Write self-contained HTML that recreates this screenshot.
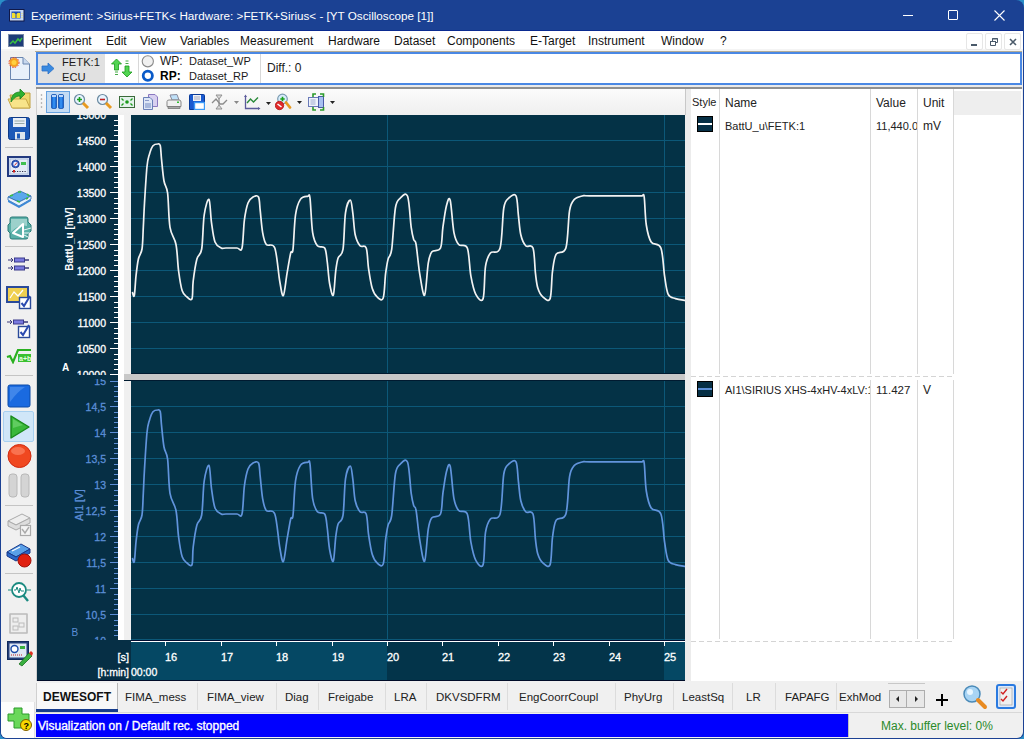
<!DOCTYPE html>
<html><head><meta charset="utf-8">
<style>
*{margin:0;padding:0;box-sizing:border-box}
html,body{width:1024px;height:739px;overflow:hidden;background:#2a8ec8;font-family:"Liberation Sans",sans-serif;font-size:12px;color:#000}
.a{position:absolute}
.t{position:absolute;white-space:nowrap;line-height:14px}
.m{position:absolute;top:34px;line-height:14px;white-space:nowrap;color:#111}
.sep{position:absolute;left:5px;width:28px;height:1px;background:#c4c4c4}
.tb{position:absolute;top:683px;height:28px;line-height:28px;white-space:nowrap;color:#222;font-size:11.5px}
.td{position:absolute;top:683px;width:1px;height:27px;background:#dcdcdc}
</style></head><body>
<div class="a" style="left:0;top:0;width:1024px;height:739px;background:#1b4193;border-radius:8px 8px 7px 7px"></div>
<!-- title -->
<svg class="a" style="left:9px;top:9px" width="16" height="13"><rect x="0.5" y="0.5" width="14.5" height="11.5" fill="#c8daf4" stroke="#101848"/><rect x="2.5" y="2.5" width="9" height="7" fill="#1a4ab8"/><path d="M3 4Q5 3 6.5 5V9H3zM7.5 5Q9 3 11 4V9H7.5z" fill="#f4e030"/><path d="M13 4v1M13 6v1M13 8v1" stroke="#f0e060" stroke-width="1"/></svg>
<div class="t" style="left:31px;top:9px;color:#fff;font-size:11.7px">Experiment: &gt;Sirius+FETK&lt; Hardware: &gt;FETK+Sirius&lt; - [YT Oscilloscope [1]]</div>
<div class="a" style="left:903px;top:15px;width:10px;height:1px;background:#fff"></div>
<div class="a" style="left:948px;top:10px;width:10px;height:10px;border:1px solid #fff;border-radius:1px"></div>
<svg class="a" style="left:994px;top:10px" width="11" height="11"><path d="M0.5 0.5L10.5 10.5M10.5 0.5L0.5 10.5" stroke="#fff" stroke-width="1.1"/></svg>
<!-- client -->
<div class="a" style="left:1px;top:30px;width:1022px;height:708px;background:#f0f0f0;border-radius:0 0 6px 6px"></div>
<!-- menu -->
<div class="a" style="left:1px;top:30px;width:1022px;height:1px;background:#0a2a90"></div><div class="a" style="left:1px;top:31px;width:1022px;height:18px;background:#fff"></div><div class="a" style="left:1px;top:49px;width:1022px;height:2px;background:#f4f4f4"></div>
<svg class="a" style="left:8px;top:34px" width="17" height="14"><rect x="0.5" y="0.5" width="15" height="12" fill="#1e3c78" stroke="#7888a8"/><path d="M2 10L5 7L7 9L10 5L12 7L14 4" stroke="#3ac040" fill="none" stroke-width="1.5"/></svg>
<span class="m" style="left:31px">Experiment</span>
<span class="m" style="left:106px">Edit</span>
<span class="m" style="left:140px">View</span>
<span class="m" style="left:180px">Variables</span>
<span class="m" style="left:240px">Measurement</span>
<span class="m" style="left:328px">Hardware</span>
<span class="m" style="left:394px">Dataset</span>
<span class="m" style="left:447px">Components</span>
<span class="m" style="left:530px">E-Target</span>
<span class="m" style="left:588px">Instrument</span>
<span class="m" style="left:661px">Window</span>
<span class="m" style="left:720px">?</span>
<div class="a" style="left:966px;top:33px;width:17px;height:17px;border:1px solid #e6e6e6;border-radius:2px;background:#fff"></div>
<div class="a" style="left:985px;top:33px;width:17px;height:17px;border:1px solid #e6e6e6;border-radius:2px;background:#fff"></div>
<div class="a" style="left:1004px;top:33px;width:17px;height:17px;border:1px solid #e6e6e6;border-radius:2px;background:#fff"></div>
<div class="a" style="left:971px;top:44px;width:6px;height:2px;background:#4a5a6a"></div>
<svg class="a" style="left:989px;top:37px" width="10" height="10"><path d="M1.5 4.5h5v4h-5zM3.5 4.5v-3h5v4h-2" stroke="#4a5a6a" fill="none" stroke-width="1"/><path d="M1 4.5h6M3 2h6" stroke="#4a5a6a" stroke-width="1.2"/></svg>
<svg class="a" style="left:1009px;top:38px" width="8" height="8"><path d="M1 1L7 7M7 1L1 7" stroke="#4a5a6a" stroke-width="1.6"/></svg>
<!-- left toolbar -->
<div class="a" style="left:1px;top:52px;width:34px;height:649px;background:#f0f0f0"></div>
<div class="a" style="left:1px;top:702px;width:34px;height:36px;background:#fdfdfd;border-radius:0 0 0 6px;border-right:1px solid #e0e0e0"></div>
<div class="sep" style="top:147px"></div>
<div class="sep" style="top:246px"></div>
<div class="sep" style="top:375px"></div>
<div class="sep" style="top:505px"></div>
<div class="sep" style="top:573px"></div>
<!-- new doc -->
<svg class="a" style="left:8px;top:56px" width="24" height="25"><path d="M2.5 1.5H15L21.5 8V23.5H2.5z" fill="#e8f0fa" stroke="#6a86b0"/><path d="M15 1.5V8H21.5" fill="#c8d8ee" stroke="#6a86b0"/><circle cx="6" cy="6.5" r="4.5" fill="#f5a020"/><circle cx="6" cy="6.5" r="2.5" fill="#ffd040"/><circle cx="6" cy="6.5" r="5" fill="none" stroke="#e83a20" stroke-width="1" stroke-dasharray="1.5 1.2"/></svg>
<!-- folder -->
<svg class="a" style="left:7px;top:87px" width="25" height="23"><path d="M3 8H10L12 6H23V21H6z" fill="#f0d870" stroke="#c0a040"/><path d="M1 12H19L23 21H5z" fill="#f8e48a" stroke="#c8a848"/><path d="M4 15C4 8 8 5 13 5V2L18 7L13 12V9C9 9 7 11 4 15z" fill="#2eb030" stroke="#1a8020" stroke-width="0.8"/></svg>
<!-- save -->
<svg class="a" style="left:8px;top:117px" width="23" height="24"><rect x="0.5" y="0.5" width="21" height="22" rx="2" fill="#1e5ab8" stroke="#0e3a88"/><rect x="5" y="1" width="13" height="9" fill="#e8eef6"/><path d="M6.5 4H16.5M6.5 6.5H16.5" stroke="#9aa"/><rect x="7" y="15" width="10" height="7.5" fill="#dfe6ee"/><rect x="9" y="16.5" width="3" height="5" fill="#1e5ab8"/></svg>
<!-- monitor -->
<svg class="a" style="left:7px;top:156px" width="25" height="22"><rect x="1" y="1" width="22" height="19" fill="#e4ecf6" stroke="#233a80" stroke-width="2"/><rect x="3" y="3" width="18" height="15" fill="none" stroke="#9ab0d8" stroke-width="0.8"/><circle cx="8.5" cy="8" r="3.8" fill="#2a5ac0" stroke="#1a3a90" stroke-width="0.8"/><circle cx="8.5" cy="8" r="2.3" fill="#e8f0ff"/><path d="M7.5 9.5L10 6.5" stroke="#d03030" stroke-width="1"/><rect x="14" y="6" width="5" height="3" fill="#40c050"/><path d="M5 15.5H19" stroke="#303050" stroke-width="1.2" stroke-dasharray="1.2 1.3"/><rect x="6" y="14" width="2" height="2.5" fill="#d02020"/></svg>
<!-- book -->
<svg class="a" style="left:7px;top:188px" width="25" height="20"><path d="M1 9L13 3L24 8L12 14z" fill="#5aa8ec" stroke="#2a6ab0" stroke-width="0.8"/><path d="M1 9V12L12 18L24 11V8L12 14z" fill="#e8f2fc" stroke="#2a6ab0" stroke-width="0.8"/><path d="M1 12L12 18L24 11V13L12 20L1 14z" fill="#3a88d8"/><path d="M3 8L6 7M11 4L14 4M20 6L22 8M10 13L13 14M19 11L21 10" stroke="#3ac040" stroke-width="1.6"/></svg>
<!-- triangle -->
<svg class="a" style="left:7px;top:216px" width="25" height="24"><path d="M5 1H19Q21 1 21 3V6L24 9V15L21 18V21Q21 23 19 23H5Q3 23 3 21V17L1 15V9L3 7V3Q3 1 5 1z" fill="#5ab0a8" stroke="#2a7a78" stroke-width="1"/><path d="M4 3H20V10Q12 8 4 16z" fill="#b8e0da" opacity="0.7"/><path d="M6 17L16 8V21z" fill="none" stroke="#fff" stroke-width="2" stroke-linejoin="round"/><path d="M17 14l7-2M17 17l7 0M17 19l6 3" stroke="#e8f4f4" stroke-width="1"/></svg>
<!-- lines -->
<svg class="a" style="left:7px;top:256px" width="24" height="18"><path d="M1 4H6M4 2L6 4L4 6M1 12H6M4 10L6 12L4 14" stroke="#3a3a7a" fill="none" stroke-width="1"/><rect x="7.5" y="2" width="10" height="4" fill="#7a7ae0" stroke="#3a3a8a"/><rect x="7.5" y="10" width="10" height="4" fill="#7a7ae0" stroke="#3a3a8a"/><path d="M18 4H22M18 12H22" stroke="#3a3a7a" stroke-width="1.5"/></svg>
<!-- chart check -->
<svg class="a" style="left:6px;top:286px" width="27" height="25"><rect x="1" y="1" width="21" height="15" fill="#f0d050" stroke="#2a4a9a" stroke-width="2"/><path d="M4 12L8 6L12 10L17 4" stroke="#fff" stroke-width="1.2" fill="none"/><rect x="13.5" y="11.5" width="11" height="11" fill="#fff" stroke="#2a4a9a" stroke-width="1.4"/><path d="M15.5 17L18 20L24 10" stroke="#2a4ab0" stroke-width="2" fill="none"/></svg>
<!-- list check -->
<svg class="a" style="left:6px;top:317px" width="26" height="22"><path d="M1 5H6M4 3L6 5L4 7" stroke="#3a3a7a" fill="none"/><rect x="7.5" y="3" width="10" height="4" fill="#7a7ae0" stroke="#3a3a8a"/><path d="M18 5H22" stroke="#3a3a7a" stroke-width="1.5"/><rect x="12.5" y="9.5" width="11" height="11" fill="#fff" stroke="#2a4a9a" stroke-width="1.4"/><path d="M14.5 15L17 18L23 8" stroke="#2a4ab0" stroke-width="2" fill="none"/></svg>
<!-- sqrt -->
<svg class="a" style="left:6px;top:348px" width="26" height="16"><path d="M1 9L4 8L7 14L12 2H25" stroke="#2ab020" stroke-width="2.2" fill="none"/><rect x="12" y="6" width="13" height="8" fill="#3ac030"/><text x="13" y="13" font-family="Liberation Sans" font-size="7" font-weight="bold" fill="#e8ffe0">a+b</text></svg>
<!-- blue square -->
<svg class="a" style="left:7px;top:384px" width="24" height="24"><rect x="1" y="1" width="22" height="22" rx="2" fill="#1a6ae0" stroke="#0a4aa8"/><path d="M3 3H18Q10 8 3 18z" fill="#5a9af0" opacity="0.6"/></svg>
<!-- play highlighted -->
<div class="a" style="left:3px;top:411px;width:31px;height:31px;background:#d0e6f8;border:1px solid #a8d0f0;border-radius:2px"></div>
<svg class="a" style="left:8px;top:414px" width="24" height="26"><path d="M3 2L21 13L3 24z" fill="#3ab83a" stroke="#1a8a1a" stroke-width="1.4" stroke-linejoin="round"/><path d="M5 5L15 11L5 14z" fill="#7ad87a" opacity="0.6"/></svg>
<!-- record -->
<svg class="a" style="left:7px;top:443px" width="25" height="26"><circle cx="12.5" cy="13" r="11.5" fill="#f04820" stroke="#d02a10"/><ellipse cx="11" cy="8" rx="7" ry="4" fill="#ff9070" opacity="0.6"/></svg>
<!-- pause gray -->
<svg class="a" style="left:7px;top:473px" width="24" height="25"><rect x="2" y="1" width="8" height="23" rx="3" fill="#d4d4d4" stroke="#b8b8b8"/><rect x="14" y="1" width="8" height="23" rx="3" fill="#d4d4d4" stroke="#b8b8b8"/></svg>
<!-- gray device -->
<svg class="a" style="left:7px;top:512px" width="25" height="26"><path d="M1 9L15 2L23 6L9 13z" fill="#eee" stroke="#aaa"/><path d="M1 9V14L9 18L23 11V6L9 13z" fill="#ddd" stroke="#aaa"/><rect x="13.5" y="13.5" width="10" height="10" fill="#f4f4f4" stroke="#aaa" stroke-width="1.2"/><path d="M15 17L18 21L22 15" stroke="#aaa" stroke-width="1.4" fill="none"/></svg>
<!-- red device -->
<svg class="a" style="left:6px;top:542px" width="26" height="26"><path d="M1 10L15 2L24 7L10 15z" fill="#5aa0e8" stroke="#1a3a8a"/><path d="M1 10V14L10 19L24 11V7L10 15z" fill="#2a68c8" stroke="#1a3a8a"/><path d="M6 9L14 5" stroke="#fff" stroke-width="1.2"/><circle cx="18.5" cy="18.5" r="6.5" fill="#e02010" stroke="#a01008"/></svg>
<!-- search wave -->
<svg class="a" style="left:7px;top:581px" width="25" height="22"><circle cx="12" cy="9" r="7" fill="#fff" stroke="#1a8a80" stroke-width="1.8"/><path d="M7 9L9 9L10 6L12 12L13 7L14 10H17" stroke="#1a8a80" stroke-width="1" fill="none"/><path d="M16 14L21 20" stroke="#1a8a80" stroke-width="2.4"/><path d="M1 9H4M20 9H24" stroke="#1a8a80" stroke-width="1"/></svg>
<!-- gray doc -->
<svg class="a" style="left:7px;top:611px" width="24" height="26"><path d="M3 3H20V22H3z" fill="#eee" stroke="#bbb" stroke-width="1.6" stroke-linejoin="round"/><rect x="6" y="7" width="5" height="4" fill="none" stroke="#bbb"/><rect x="12" y="12" width="5" height="4" fill="none" stroke="#bbb"/><rect x="6" y="15" width="5" height="4" fill="none" stroke="#bbb"/></svg>
<!-- monitor pen -->
<svg class="a" style="left:7px;top:641px" width="26" height="26"><rect x="0.5" y="0.5" width="21" height="18" fill="#243e7a" stroke="#102a5a"/><rect x="2.5" y="2.5" width="17" height="14" fill="#dfe8f4"/><circle cx="7.5" cy="8" r="3.5" fill="#fff" stroke="#1a4aa8" stroke-width="1.4"/><rect x="13" y="5" width="5" height="3" fill="#3ab040"/><path d="M4 14H16" stroke="#c02020" stroke-width="1.2" stroke-dasharray="1 1"/><path d="M12 23L22 12L25 15L15 25z" fill="#3ab040" stroke="#1a7020" stroke-width="0.8"/><path d="M22 12L24 10L26 12L25 15z" fill="#e03020"/></svg>
<!-- green plus -->
<svg class="a" style="left:7px;top:707px" width="25" height="24"><path d="M7 1H15V7H22V14H15V21H7V14H1V7H7z" fill="#6ad85a" stroke="#2a9a2a"/><circle cx="19" cy="18" r="5.5" fill="#f8d800" stroke="#806000"/><text x="16.5" y="21.5" font-family="Liberation Sans" font-size="9" font-weight="bold" fill="#000">?</text></svg>
<!-- main toolbar -->
<div class="a" style="left:35px;top:51px;width:987px;height:1px;background:#b4ab94"></div>
<div class="a" style="left:36px;top:52px;width:986px;height:33px;border:2px solid #4a88e4;background:#fff"></div>
<div class="a" style="left:38px;top:54px;width:67px;height:29px;background:#e1e1e1"></div>
<div class="a" style="left:138px;top:54px;width:1px;height:29px;background:#d8d8d8"></div>
<div class="a" style="left:260px;top:54px;width:1px;height:29px;background:#d8d8d8"></div>
<svg class="a" style="left:41px;top:62px" width="14" height="13"><path d="M1 4h6V1l6 5.5-6 5.5V9H1z" fill="#3a8ae0" stroke="#2a70c8" stroke-width="0.8"/></svg>
<div class="t" style="left:62px;top:54.5px;font-size:11.2px;color:#1a1a1a">FETK:1</div>
<div class="t" style="left:62px;top:69.5px;font-size:11.2px;color:#1a1a1a">ECU</div>
<svg class="a" style="left:111px;top:58px" width="22" height="20"><path d="M5.5 1L10.5 6H7.5V12H3.5V6H0.5z" fill="#52d452" stroke="#1a9a1a" stroke-width="0.8"/><path d="M4 14h3M4 16.5h3" stroke="#4a4" stroke-width="1"/><path d="M16 19L21 14H18V8H14V14H11z" fill="#52d452" stroke="#1a9a1a" stroke-width="0.8"/><path d="M14.5 3h3M14.5 5.5h3" stroke="#4a4" stroke-width="1"/></svg>
<svg class="a" style="left:141px;top:55px" width="14" height="28"><circle cx="6.8" cy="6.3" r="5.6" fill="#f0f0f0" stroke="#8a8a8a" stroke-width="1.1"/><circle cx="6.8" cy="20.8" r="4.6" fill="#fff" stroke="#0a5ac8" stroke-width="2.8"/></svg>
<div class="t" style="left:160px;top:54px;color:#1a1a1a;font-size:12px">WP:</div>
<div class="t" style="left:160px;top:69px;color:#000;font-size:12px;font-weight:bold">RP:</div>
<div class="t" style="left:189px;top:54px;color:#1a1a1a;font-size:11px">Dataset_WP</div>
<div class="t" style="left:189px;top:69px;color:#1a1a1a;font-size:11px">Dataset_RP</div>
<div class="t" style="left:267px;top:61px;color:#1a1a1a;font-size:12px">Diff.: 0</div>
<div class="a" style="left:35px;top:85px;width:987px;height:2px;background:#eaeaea"></div>
<div class="a" style="left:36px;top:87px;width:986px;height:2px;background:#909090"></div>
<!-- plot toolbar -->
<div class="a" style="left:36px;top:89px;width:651px;height:26px;background:linear-gradient(#fbfbfb,#efefef)"></div>
<div class="a" style="left:36px;top:89px;width:1px;height:593px;background:#d0d0d0"></div>
<svg class="a" style="left:40px;top:93px" width="3" height="20"><circle cx="1.5" cy="2" r="0.8" fill="#999"/><circle cx="1.5" cy="6" r="0.8" fill="#999"/><circle cx="1.5" cy="10" r="0.8" fill="#999"/><circle cx="1.5" cy="14" r="0.8" fill="#999"/></svg>
<div class="a" style="left:46px;top:91px;width:24px;height:22px;background:#c4dcf4;border:1px solid #66a2e0"></div>
<svg class="a" style="left:51px;top:94px" width="14" height="16"><defs><linearGradient id="pg" x1="0" x2="1"><stop offset="0" stop-color="#0a58c8"/><stop offset="0.5" stop-color="#3a98f8"/><stop offset="1" stop-color="#0a58c8"/></linearGradient></defs><rect x="0.5" y="0.5" width="5" height="14" rx="1.2" fill="url(#pg)" stroke="#0a48a8" stroke-width="0.7"/><rect x="7.5" y="0.5" width="5" height="14" rx="1.2" fill="url(#pg)" stroke="#0a48a8" stroke-width="0.7"/><rect x="1" y="1" width="4" height="2" fill="#bcd8fc"/><rect x="8" y="1" width="4" height="2" fill="#bcd8fc"/></svg>
<svg class="a" style="left:73px;top:93px" width="17" height="18"><circle cx="6.5" cy="6.5" r="5" fill="#e8f4ff" stroke="#6a8aa0" stroke-width="1.2"/><path d="M4 6.5h5M6.5 4v5" stroke="#1aa01a" stroke-width="1.6"/><path d="M10 10l5 5" stroke="#e89a20" stroke-width="3"/></svg>
<svg class="a" style="left:96px;top:93px" width="17" height="18"><circle cx="6.5" cy="6.5" r="5" fill="#e8f4ff" stroke="#6a8aa0" stroke-width="1.2"/><path d="M4 6.5h5" stroke="#c02020" stroke-width="1.6"/><path d="M10 10l5 5" stroke="#e89a20" stroke-width="3"/></svg>
<svg class="a" style="left:119px;top:96px" width="17" height="13"><rect x="0.5" y="0.5" width="15" height="11" fill="#e4f2ec" stroke="#3a6a3a"/><circle cx="8" cy="6" r="1.8" fill="#1a9a1a"/><path d="M2.5 2.5l2 2M13.5 2.5l-2 2M2.5 9.5l2-2M13.5 9.5l-2-2" stroke="#1a9a1a" stroke-width="1.3"/></svg>
<svg class="a" style="left:143px;top:94px" width="16" height="16"><path d="M5.5 0.5H12L14.5 3V12.5H5.5z" fill="#d8d0f0" stroke="#8a78c0"/><path d="M0.5 3.5H7L9.5 6V15.5H0.5z" fill="#dde6f6" stroke="#6a80b8"/><rect x="2" y="9" width="6" height="5" fill="#a8b8dc"/><path d="M2 6.5H6" stroke="#8a9ac8"/></svg>
<svg class="a" style="left:166px;top:94px" width="16" height="16"><path d="M4 1L11 0.5L13 6H6z" fill="#bfe0f8" stroke="#889"/><path d="M1 7.5Q1 6 3 6H13Q15 6 15 8V12.5H1z" fill="#f0f0f0" stroke="#888"/><path d="M2 12.5H14V14.5H2z" fill="#a8a8a8" stroke="#777" stroke-width="0.8"/><rect x="11" y="7.5" width="2" height="1.5" fill="#30c030"/></svg>
<svg class="a" style="left:189px;top:94px" width="16" height="16"><path d="M0.5 1.5Q0.5 0.5 1.5 0.5H14.5Q15.5 0.5 15.5 1.5V15.5H0.5z" fill="#1a5ad0" stroke="#0a3a98"/><rect x="4" y="1" width="8" height="6" fill="#eef2f8"/><path d="M5 3H11M5 5H11" stroke="#aab"/><rect x="5.5" y="8.5" width="10" height="7" fill="#fff" stroke="#3a9af8" stroke-width="1.4"/></svg>
<svg class="a" style="left:211px;top:93px" width="30" height="18"><path d="M5 2H11L8 6zM5 16H11L8 12z" fill="#d8d8d8" stroke="#8a8a8a" stroke-width="0.9"/><path d="M8 6V12" stroke="#8a8a8a" stroke-width="1.2"/><path d="M1 10L5 6L9 11L12 11L16 7" stroke="#8a8a8a" stroke-width="1.3" fill="none"/><path d="M23 8h5l-2.5 3z" fill="#888"/></svg>
<svg class="a" style="left:244px;top:94px" width="30" height="17"><path d="M1.5 2V14.5H15" stroke="#5a5a9a" stroke-width="1.3" fill="none"/><path d="M0 3L1.5 0.5L3 3zM14 13L16.5 14.5L14 16z" fill="#5a5a9a"/><path d="M3 9L6.5 5L9.5 8L14 3.5" stroke="#2a8a3a" stroke-width="1.4" fill="none"/><path d="M22 8h5l-2.5 3z" fill="#222"/></svg>
<svg class="a" style="left:275px;top:93px" width="30" height="18"><circle cx="7.5" cy="6" r="4.8" fill="#d8eefc" stroke="#7a9ab0" stroke-width="1.2"/><path d="M5.3 6h4.4M7.5 3.8v4.4" stroke="#1aa01a" stroke-width="1.6"/><path d="M11 9.5l4 5" stroke="#e89a20" stroke-width="2.8" stroke-linecap="round"/><circle cx="4.5" cy="12.5" r="4.2" fill="#e02828" stroke="#b01818" stroke-width="0.8"/><path d="M2.5 11l4 3" stroke="#fff" stroke-width="1.5"/><path d="M22 8h5l-2.5 3z" fill="#222"/></svg>
<svg class="a" style="left:308px;top:93px" width="30" height="18"><rect x="0.5" y="4.5" width="10" height="9" fill="#eef2fa" stroke="#6a7ab8"/><path d="M2.5 7H7.5M2.5 9H7.5M2.5 11H7.5" stroke="#8a9ac8" stroke-width="0.8"/><rect x="10.5" y="3.5" width="5" height="11" fill="#a8c0f0" stroke="#4a5aa8"/><path d="M8 1H5V4M12 1H15.5V4M8 17H5V14M12 17H15.5V14" stroke="#2a9a2a" stroke-width="1.6" fill="none"/><path d="M22 8h5l-2.5 3z" fill="#222"/></svg>
<!-- legend -->
<div class="a" style="left:685px;top:89px;width:6px;height:592px;background:#ececec"></div>
<div class="a" style="left:685px;top:89px;width:1px;height:26px;background:#c8c8c8"></div>
<div class="a" style="left:691px;top:89px;width:331px;height:592px;background:#fff"></div>
<div class="a" style="left:953px;top:91px;width:68px;height:24px;background:#eeeeee"></div>
<div class="a" style="left:719px;top:89px;width:1px;height:285px;background:#d8d8d8"></div>
<div class="a" style="left:870px;top:89px;width:1px;height:285px;background:#d8d8d8"></div>
<div class="a" style="left:917px;top:89px;width:1px;height:285px;background:#d8d8d8"></div>
<div class="a" style="left:953px;top:89px;width:1px;height:285px;background:#d8d8d8"></div>
<div class="a" style="left:719px;top:380px;width:1px;height:259px;background:#d8d8d8"></div>
<div class="a" style="left:870px;top:380px;width:1px;height:259px;background:#d8d8d8"></div>
<div class="a" style="left:917px;top:380px;width:1px;height:259px;background:#d8d8d8"></div>
<div class="a" style="left:953px;top:380px;width:1px;height:259px;background:#d8d8d8"></div>
<svg class="a" style="left:691px;top:375px" width="264" height="3"><path d="M0 1.5H263" stroke="#d4d4d4" stroke-width="1" stroke-dasharray="5 3"/></svg>
<svg class="a" style="left:691px;top:640px" width="264" height="3"><path d="M0 1.5H263" stroke="#d4d4d4" stroke-width="1" stroke-dasharray="5 3"/></svg>
<div class="t" style="left:692px;top:94.5px;color:#222;font-size:11px">Style</div>
<div class="t" style="left:725px;top:96px;color:#222">Name</div>
<div class="t" style="left:876px;top:96px;color:#222">Value</div>
<div class="t" style="left:923px;top:96px;color:#222">Unit</div>
<div class="a" style="left:697px;top:116px;width:16px;height:16px;background:#062f45;border:1px solid #000"></div>
<div class="a" style="left:698px;top:123px;width:14px;height:2px;background:#ffffff"></div>
<div class="t" style="left:725px;top:119px;color:#222;font-size:11px">BattU_u\FETK:1</div>
<div class="a" style="left:871px;top:115px;width:46px;height:20px;overflow:hidden"><div class="t" style="left:5px;top:4px;color:#222;font-size:11px">11,440.0</div></div>
<div class="t" style="left:923px;top:119px;color:#222">mV</div>
<div class="a" style="left:697px;top:381px;width:16px;height:16px;background:#062f45;border:1px solid #000"></div>
<div class="a" style="left:698px;top:388px;width:14px;height:2px;background:#5b8ed6"></div>
<div class="a" style="left:720px;top:380px;width:150px;height:20px;overflow:hidden"><div class="t" style="left:5px;top:3px;color:#222;font-size:11px">AI1\SIRIUS XHS-4xHV-4xLV:1</div></div>
<div class="t" style="left:876px;top:383px;color:#222;font-size:11.5px">11.427</div>
<div class="t" style="left:923px;top:383px;color:#222">V</div>
<!-- y axis / plots -->
<div class="a" style="left:37px;top:115px;width:81px;height:565px;background:#062f45"></div>
<div class="a" style="left:118px;top:640px;width:13px;height:40px;background:#062f45"></div>
<div class="a" style="left:118px;top:115px;width:6px;height:525px;background:#fff"></div>
<div class="a" style="left:124px;top:115px;width:7px;height:525px;background:#f0f0f0"></div>
<div class="a" style="left:131px;top:115px;width:554px;height:259px;background:#043246"></div>
<div class="a" style="left:124px;top:374px;width:561px;height:6px;background:#c8c8c8"></div>
<div class="a" style="left:131px;top:380px;width:554px;height:260px;background:#043246"></div>
<div class="a" style="left:131px;top:640px;width:554px;height:40px;background:#03344a"></div>
<div class="a" style="left:131px;top:640px;width:256px;height:40px;background:#054864"></div>
<div class="a" style="left:664px;top:640px;width:21px;height:40px;background:#054864"></div>
<div class="a" style="left:37px;top:680px;width:648px;height:1px;background:#000c28"></div>
<svg class="a" style="left:0;top:0" width="1024" height="739" shape-rendering="auto">
<defs><clipPath id="c1"><rect x="131" y="115" width="554" height="258"/></clipPath><clipPath id="c2"><rect x="131" y="381" width="554" height="258"/></clipPath><clipPath id="a1"><rect x="37" y="115" width="81" height="260"/></clipPath><clipPath id="a2"><rect x="37" y="379" width="81" height="261"/></clipPath></defs>
<path d="M131 140.5 H685 M131 166.5 H685 M131 192.5 H685 M131 218.5 H685 M131 244.5 H685 M131 270.5 H685 M131 296.5 H685 M131 322.5 H685 M131 348.5 H685 M131 406.5 H685 M131 432.5 H685 M131 458.5 H685 M131 484.5 H685 M131 510.5 H685 M131 536.5 H685 M131 562.5 H685 M131 588.5 H685 M131 614.5 H685 M131 639.5 H685 M387.5 115 V374 M387.5 381 V640 M664.5 115 V374 M664.5 381 V640" stroke="#0c5878" stroke-width="1" fill="none"/>
<path d="M131 640.5 H685" stroke="#000c30" stroke-width="1"/>
<path d="M131 373.5 H685 M124 380.5 H685" stroke="#001a30" stroke-width="1"/>
<path d="M132.30 292.00 C132.63 292.60 133.68 298.27 134.30 295.60 C134.92 292.93 135.32 282.10 136.00 276.00 C136.68 269.90 137.40 263.50 138.40 259.00 C139.40 254.50 141.18 254.27 142.00 249.00 C142.82 243.73 142.88 235.07 143.30 227.40 C143.72 219.73 143.88 213.15 144.50 203.00 C145.12 192.85 146.18 174.60 147.00 166.50 C147.82 158.40 148.40 157.85 149.40 154.40 C150.40 150.95 151.58 147.53 153.00 145.80 C154.42 144.07 156.68 144.00 157.90 144.00 C159.12 144.00 159.70 143.30 160.30 145.80 C160.90 148.30 160.88 153.13 161.50 159.00 C162.12 164.87 162.98 175.33 164.00 181.00 C165.02 186.67 166.60 185.27 167.60 193.00 C168.60 200.73 168.60 218.82 170.00 227.40 C171.40 235.98 174.57 237.23 176.00 244.50 C177.43 251.77 177.57 263.28 178.60 271.00 C179.63 278.72 180.80 286.47 182.20 290.80 C183.60 295.13 185.37 295.70 187.00 297.00 C188.63 298.30 190.97 301.27 192.00 298.60 C193.03 295.93 192.38 287.60 193.20 281.00 C194.02 274.40 195.48 264.33 196.90 259.00 C198.32 253.67 200.48 256.33 201.70 249.00 C202.92 241.67 202.98 223.27 204.20 215.00 C205.42 206.73 207.78 198.13 209.00 199.40 C210.22 200.67 210.50 215.50 211.50 222.60 C212.50 229.70 213.38 237.77 215.00 242.00 C216.62 246.23 219.37 247.00 221.20 248.00 C223.03 249.00 223.37 248.00 226.00 248.00 C228.63 248.00 234.33 248.00 237.00 248.00 C239.67 248.00 240.77 252.67 242.00 248.00 C243.23 243.33 243.40 227.50 244.40 220.00 C245.40 212.50 246.57 206.83 248.00 203.00 C249.43 199.17 251.25 198.00 253.00 197.00 C254.75 196.00 257.30 194.77 258.50 197.00 C259.70 199.23 259.52 204.52 260.20 210.40 C260.88 216.28 261.58 226.62 262.60 232.30 C263.62 237.98 264.27 241.88 266.30 244.50 C268.33 247.12 272.57 241.92 274.80 248.00 C277.03 254.08 278.28 273.07 279.70 281.00 C281.12 288.93 282.08 296.82 283.30 295.60 C284.52 294.38 285.77 280.80 287.00 273.70 C288.23 266.60 289.70 257.05 290.70 253.00 C291.70 248.95 292.20 255.73 293.00 249.40 C293.80 243.07 294.27 223.33 295.50 215.00 C296.73 206.67 298.37 202.52 300.40 199.40 C302.43 196.28 306.10 196.50 307.70 196.30 C309.30 196.10 309.18 192.20 310.00 198.20 C310.82 204.20 311.37 224.38 312.60 232.30 C313.83 240.22 315.38 243.08 317.40 245.70 C319.42 248.32 323.07 245.37 324.70 248.00 C326.33 250.63 326.38 255.58 327.20 261.50 C328.02 267.42 328.58 277.88 329.60 283.50 C330.62 289.12 332.28 297.23 333.30 295.20 C334.32 293.17 334.90 277.50 335.70 271.30 C336.50 265.10 336.88 261.65 338.10 258.00 C339.32 254.35 341.77 256.93 343.00 249.40 C344.23 241.87 344.28 221.00 345.50 212.80 C346.72 204.60 349.08 200.20 350.30 200.20 C351.52 200.20 351.98 207.05 352.80 212.80 C353.62 218.55 354.00 229.22 355.20 234.70 C356.40 240.18 358.17 243.48 360.00 245.70 C361.83 247.92 364.77 244.13 366.20 248.00 C367.63 251.87 367.60 262.18 368.60 268.90 C369.60 275.62 370.78 283.63 372.20 288.30 C373.62 292.97 375.27 295.28 377.10 296.90 C378.93 298.52 381.78 301.87 383.20 298.00 C384.62 294.13 384.78 280.18 385.60 273.70 C386.42 267.22 387.08 263.15 388.10 259.10 C389.12 255.05 390.48 257.92 391.70 249.40 C392.92 240.88 393.97 216.53 395.40 208.00 C396.83 199.47 398.27 200.15 400.30 198.20 C402.33 196.25 405.78 191.43 407.60 196.30 C409.42 201.17 410.18 220.18 411.20 227.40 C412.22 234.62 412.88 236.75 413.70 239.60 C414.52 242.45 415.10 238.82 416.10 244.50 C417.10 250.18 418.28 265.25 419.70 273.70 C421.12 282.15 423.17 297.02 424.60 295.20 C426.03 293.38 427.08 270.03 428.30 262.80 C429.52 255.57 429.87 254.27 431.90 251.80 C433.93 249.33 438.67 252.07 440.50 248.00 C442.33 243.93 441.90 234.48 442.90 227.40 C443.90 220.32 445.28 210.03 446.50 205.50 C447.72 200.97 448.97 195.73 450.20 200.20 C451.43 204.67 452.48 224.92 453.90 232.30 C455.32 239.68 456.47 241.88 458.70 244.50 C460.93 247.12 465.27 242.72 467.30 248.00 C469.33 253.28 469.48 268.47 470.90 276.20 C472.32 283.93 473.77 290.67 475.80 294.40 C477.83 298.13 481.48 303.27 483.10 298.60 C484.72 293.93 484.28 274.00 485.50 266.40 C486.72 258.80 487.97 256.07 490.40 253.00 C492.83 249.93 497.87 255.50 500.10 248.00 C502.33 240.50 502.37 216.30 503.80 208.00 C505.23 199.70 506.67 200.23 508.70 198.20 C510.73 196.17 514.38 192.95 516.00 195.80 C517.62 198.65 517.60 208.82 518.40 215.30 C519.20 221.78 519.58 229.63 520.80 234.70 C522.02 239.77 523.67 243.48 525.70 245.70 C527.73 247.92 531.37 243.33 533.00 248.00 C534.63 252.67 534.68 266.98 535.50 273.70 C536.32 280.42 536.68 284.43 537.90 288.30 C539.12 292.17 540.77 295.18 542.80 296.90 C544.83 298.62 548.48 302.87 550.10 298.60 C551.72 294.33 551.48 278.70 552.50 271.30 C553.52 263.90 553.97 258.08 556.20 254.20 C558.43 250.32 563.67 255.30 565.90 248.00 C568.13 240.70 568.18 218.50 569.60 210.40 C571.02 202.30 572.17 201.83 574.40 199.40 C576.63 196.97 580.40 196.40 583.00 195.80 C585.60 195.20 581.00 195.80 590.00 195.80 C599.00 195.80 628.33 195.78 637.00 195.80 C645.67 195.82 640.80 195.70 642.00 195.90 C643.20 196.10 643.48 192.15 644.20 197.00 C644.92 201.85 645.13 217.50 646.30 225.00 C647.47 232.50 648.77 238.17 651.20 242.00 C653.63 245.83 658.67 242.30 660.90 248.00 C663.13 253.70 663.38 268.47 664.60 276.20 C665.82 283.93 666.38 290.67 668.20 294.40 C670.02 298.13 672.65 297.58 675.50 298.60 C678.35 299.62 683.67 300.18 685.30 300.50" stroke="#f2f2f2" stroke-width="1.7" fill="none" stroke-linejoin="round" clip-path="url(#c1)"/>
<path d="M132.30 558.00 C132.63 558.60 133.68 564.27 134.30 561.60 C134.92 558.93 135.32 548.10 136.00 542.00 C136.68 535.90 137.40 529.50 138.40 525.00 C139.40 520.50 141.18 520.27 142.00 515.00 C142.82 509.73 142.88 501.07 143.30 493.40 C143.72 485.73 143.88 479.15 144.50 469.00 C145.12 458.85 146.18 440.60 147.00 432.50 C147.82 424.40 148.40 423.85 149.40 420.40 C150.40 416.95 151.58 413.53 153.00 411.80 C154.42 410.07 156.68 410.00 157.90 410.00 C159.12 410.00 159.70 409.30 160.30 411.80 C160.90 414.30 160.88 419.13 161.50 425.00 C162.12 430.87 162.98 441.33 164.00 447.00 C165.02 452.67 166.60 451.27 167.60 459.00 C168.60 466.73 168.60 484.82 170.00 493.40 C171.40 501.98 174.57 503.23 176.00 510.50 C177.43 517.77 177.57 529.28 178.60 537.00 C179.63 544.72 180.80 552.47 182.20 556.80 C183.60 561.13 185.37 561.70 187.00 563.00 C188.63 564.30 190.97 567.27 192.00 564.60 C193.03 561.93 192.38 553.60 193.20 547.00 C194.02 540.40 195.48 530.33 196.90 525.00 C198.32 519.67 200.48 522.33 201.70 515.00 C202.92 507.67 202.98 489.27 204.20 481.00 C205.42 472.73 207.78 464.13 209.00 465.40 C210.22 466.67 210.50 481.50 211.50 488.60 C212.50 495.70 213.38 503.77 215.00 508.00 C216.62 512.23 219.37 513.00 221.20 514.00 C223.03 515.00 223.37 514.00 226.00 514.00 C228.63 514.00 234.33 514.00 237.00 514.00 C239.67 514.00 240.77 518.67 242.00 514.00 C243.23 509.33 243.40 493.50 244.40 486.00 C245.40 478.50 246.57 472.83 248.00 469.00 C249.43 465.17 251.25 464.00 253.00 463.00 C254.75 462.00 257.30 460.77 258.50 463.00 C259.70 465.23 259.52 470.52 260.20 476.40 C260.88 482.28 261.58 492.62 262.60 498.30 C263.62 503.98 264.27 507.88 266.30 510.50 C268.33 513.12 272.57 507.92 274.80 514.00 C277.03 520.08 278.28 539.07 279.70 547.00 C281.12 554.93 282.08 562.82 283.30 561.60 C284.52 560.38 285.77 546.80 287.00 539.70 C288.23 532.60 289.70 523.05 290.70 519.00 C291.70 514.95 292.20 521.73 293.00 515.40 C293.80 509.07 294.27 489.33 295.50 481.00 C296.73 472.67 298.37 468.52 300.40 465.40 C302.43 462.28 306.10 462.50 307.70 462.30 C309.30 462.10 309.18 458.20 310.00 464.20 C310.82 470.20 311.37 490.38 312.60 498.30 C313.83 506.22 315.38 509.08 317.40 511.70 C319.42 514.32 323.07 511.37 324.70 514.00 C326.33 516.63 326.38 521.58 327.20 527.50 C328.02 533.42 328.58 543.88 329.60 549.50 C330.62 555.12 332.28 563.23 333.30 561.20 C334.32 559.17 334.90 543.50 335.70 537.30 C336.50 531.10 336.88 527.65 338.10 524.00 C339.32 520.35 341.77 522.93 343.00 515.40 C344.23 507.87 344.28 487.00 345.50 478.80 C346.72 470.60 349.08 466.20 350.30 466.20 C351.52 466.20 351.98 473.05 352.80 478.80 C353.62 484.55 354.00 495.22 355.20 500.70 C356.40 506.18 358.17 509.48 360.00 511.70 C361.83 513.92 364.77 510.13 366.20 514.00 C367.63 517.87 367.60 528.18 368.60 534.90 C369.60 541.62 370.78 549.63 372.20 554.30 C373.62 558.97 375.27 561.28 377.10 562.90 C378.93 564.52 381.78 567.87 383.20 564.00 C384.62 560.13 384.78 546.18 385.60 539.70 C386.42 533.22 387.08 529.15 388.10 525.10 C389.12 521.05 390.48 523.92 391.70 515.40 C392.92 506.88 393.97 482.53 395.40 474.00 C396.83 465.47 398.27 466.15 400.30 464.20 C402.33 462.25 405.78 457.43 407.60 462.30 C409.42 467.17 410.18 486.18 411.20 493.40 C412.22 500.62 412.88 502.75 413.70 505.60 C414.52 508.45 415.10 504.82 416.10 510.50 C417.10 516.18 418.28 531.25 419.70 539.70 C421.12 548.15 423.17 563.02 424.60 561.20 C426.03 559.38 427.08 536.03 428.30 528.80 C429.52 521.57 429.87 520.27 431.90 517.80 C433.93 515.33 438.67 518.07 440.50 514.00 C442.33 509.93 441.90 500.48 442.90 493.40 C443.90 486.32 445.28 476.03 446.50 471.50 C447.72 466.97 448.97 461.73 450.20 466.20 C451.43 470.67 452.48 490.92 453.90 498.30 C455.32 505.68 456.47 507.88 458.70 510.50 C460.93 513.12 465.27 508.72 467.30 514.00 C469.33 519.28 469.48 534.47 470.90 542.20 C472.32 549.93 473.77 556.67 475.80 560.40 C477.83 564.13 481.48 569.27 483.10 564.60 C484.72 559.93 484.28 540.00 485.50 532.40 C486.72 524.80 487.97 522.07 490.40 519.00 C492.83 515.93 497.87 521.50 500.10 514.00 C502.33 506.50 502.37 482.30 503.80 474.00 C505.23 465.70 506.67 466.23 508.70 464.20 C510.73 462.17 514.38 458.95 516.00 461.80 C517.62 464.65 517.60 474.82 518.40 481.30 C519.20 487.78 519.58 495.63 520.80 500.70 C522.02 505.77 523.67 509.48 525.70 511.70 C527.73 513.92 531.37 509.33 533.00 514.00 C534.63 518.67 534.68 532.98 535.50 539.70 C536.32 546.42 536.68 550.43 537.90 554.30 C539.12 558.17 540.77 561.18 542.80 562.90 C544.83 564.62 548.48 568.87 550.10 564.60 C551.72 560.33 551.48 544.70 552.50 537.30 C553.52 529.90 553.97 524.08 556.20 520.20 C558.43 516.32 563.67 521.30 565.90 514.00 C568.13 506.70 568.18 484.50 569.60 476.40 C571.02 468.30 572.17 467.83 574.40 465.40 C576.63 462.97 580.40 462.40 583.00 461.80 C585.60 461.20 581.00 461.80 590.00 461.80 C599.00 461.80 628.33 461.78 637.00 461.80 C645.67 461.82 640.80 461.70 642.00 461.90 C643.20 462.10 643.48 458.15 644.20 463.00 C644.92 467.85 645.13 483.50 646.30 491.00 C647.47 498.50 648.77 504.17 651.20 508.00 C653.63 511.83 658.67 508.30 660.90 514.00 C663.13 519.70 663.38 534.47 664.60 542.20 C665.82 549.93 666.38 556.67 668.20 560.40 C670.02 564.13 672.65 563.58 675.50 564.60 C678.35 565.62 683.67 566.18 685.30 566.50" stroke="#6194dc" stroke-width="1.7" fill="none" stroke-linejoin="round" clip-path="url(#c2)"/>
<path d="M110 114.5 H118 M114 120.5 H118 M114 125.5 H118 M114 130.5 H118 M114 135.5 H118 M110 140.5 H118 M114 146.5 H118 M114 151.5 H118 M114 156.5 H118 M114 161.5 H118 M110 166.5 H118 M114 172.5 H118 M114 177.5 H118 M114 182.5 H118 M114 187.5 H118 M110 192.5 H118 M114 198.5 H118 M114 203.5 H118 M114 208.5 H118 M114 213.5 H118 M110 218.5 H118 M114 224.5 H118 M114 229.5 H118 M114 234.5 H118 M114 239.5 H118 M110 244.5 H118 M114 250.5 H118 M114 255.5 H118 M114 260.5 H118 M114 265.5 H118 M110 270.5 H118 M114 276.5 H118 M114 281.5 H118 M114 286.5 H118 M114 291.5 H118 M110 296.5 H118 M114 302.5 H118 M114 307.5 H118 M114 312.5 H118 M114 317.5 H118 M110 322.5 H118 M114 328.5 H118 M114 333.5 H118 M114 338.5 H118 M114 343.5 H118 M110 348.5 H118 M114 354.5 H118 M114 359.5 H118 M114 364.5 H118 M114 369.5 H118 M110 374.5 H118" stroke="#ffffff" stroke-width="1" clip-path="url(#a1)"/>
<path d="M110 381.5 H118 M114 386.5 H118 M114 391.5 H118 M114 396.5 H118 M114 401.5 H118 M110 406.5 H118 M114 412.5 H118 M114 417.5 H118 M114 422.5 H118 M114 427.5 H118 M110 432.5 H118 M114 438.5 H118 M114 443.5 H118 M114 448.5 H118 M114 453.5 H118 M110 458.5 H118 M114 464.5 H118 M114 469.5 H118 M114 474.5 H118 M114 479.5 H118 M110 484.5 H118 M114 490.5 H118 M114 495.5 H118 M114 500.5 H118 M114 505.5 H118 M110 510.5 H118 M114 516.5 H118 M114 521.5 H118 M114 526.5 H118 M114 531.5 H118 M110 536.5 H118 M114 542.5 H118 M114 547.5 H118 M114 552.5 H118 M114 557.5 H118 M110 562.5 H118 M114 568.5 H118 M114 573.5 H118 M114 578.5 H118 M114 583.5 H118 M110 588.5 H118 M114 594.5 H118 M114 599.5 H118 M114 604.5 H118 M114 609.5 H118 M110 614.5 H118 M114 620.5 H118 M114 625.5 H118 M114 630.5 H118 M114 635.5 H118 M110 640.5 H118" stroke="#5b8ed6" stroke-width="1" clip-path="url(#a2)"/>
<g clip-path="url(#a1)" fill="#ffffff" stroke="#ffffff" stroke-width="0.3" font-family="Liberation Sans" font-size="10.5px"><text x="106" y="119.0" text-anchor="end">15000</text><text x="106" y="145.0" text-anchor="end">14500</text><text x="106" y="171.0" text-anchor="end">14000</text><text x="106" y="197.0" text-anchor="end">13500</text><text x="106" y="223.0" text-anchor="end">13000</text><text x="106" y="249.0" text-anchor="end">12500</text><text x="106" y="275.0" text-anchor="end">12000</text><text x="106" y="301.0" text-anchor="end">11500</text><text x="106" y="327.0" text-anchor="end">11000</text><text x="106" y="353.0" text-anchor="end">10500</text><text x="106" y="379.0" text-anchor="end">10000</text></g>
<g clip-path="url(#a2)" fill="#5b8ed6" stroke="#5b8ed6" stroke-width="0.3" font-family="Liberation Sans" font-size="10.5px"><text x="106" y="385.0" text-anchor="end">15</text><text x="106" y="411.0" text-anchor="end">14,5</text><text x="106" y="437.0" text-anchor="end">14</text><text x="106" y="463.0" text-anchor="end">13,5</text><text x="106" y="489.0" text-anchor="end">13</text><text x="106" y="515.0" text-anchor="end">12,5</text><text x="106" y="541.0" text-anchor="end">12</text><text x="106" y="567.0" text-anchor="end">11,5</text><text x="106" y="593.0" text-anchor="end">11</text><text x="106" y="619.0" text-anchor="end">10,5</text><text x="106" y="645.0" text-anchor="end">10</text></g>
<text transform="translate(72.5,239) rotate(-90)" text-anchor="middle" fill="#fff" font-family="Liberation Sans" font-size="10px" font-weight="bold">BattU_u [mV]</text>
<text transform="translate(82.5,505) rotate(-90)" text-anchor="middle" fill="#5b8ed6" stroke="#5b8ed6" stroke-width="0.3" font-family="Liberation Sans" font-size="10.5px">AI1 [V]</text>
<text x="62" y="371" fill="#fff" font-family="Liberation Sans" font-size="10px" font-weight="bold">A</text>
<text x="71.5" y="636" fill="#5b8ed6" font-family="Liberation Sans" font-size="10px">B</text>
<path d="M131 641.5 H685" stroke="#fff" stroke-width="1"/>
<path d="M165.5 642 V646 M221.5 642 V646 M276.5 642 V646 M332.5 642 V646 M387.5 642 V646 M442.5 642 V646 M498.5 642 V646 M553.5 642 V646 M609.5 642 V646 M664.5 642 V646" stroke="#fff" stroke-width="1"/>
<g fill="#fff" stroke="#fff" stroke-width="0.3" font-family="Liberation Sans" font-size="11px"><text x="165.0" y="661">16</text><text x="221.0" y="661">17</text><text x="276.0" y="661">18</text><text x="332.0" y="661">19</text><text x="387.0" y="661">20</text><text x="442.0" y="661">21</text><text x="498.0" y="661">22</text><text x="553.0" y="661">23</text><text x="609.0" y="661">24</text><text x="664.0" y="661">25</text><text x="129" y="661" text-anchor="end">[s]</text><text x="129" y="676" text-anchor="end" font-size="10.5px">[h:min]</text><text x="131" y="676" font-size="10.5px">00:00</text></g>
</svg><!-- tabs -->
<div class="a" style="left:35px;top:681px;width:987px;height:32px;background:#f0f0f0"></div>
<div class="a" style="left:36px;top:683px;width:82px;height:28px;background:#f8f8f8;border-left:1px solid #d0d0d0;border-right:1px solid #b8b8b8"></div>
<div class="a" style="left:36px;top:709px;width:82px;height:3px;background:#163c8c"></div>
<div class="tb" style="left:43px;color:#111;font-weight:bold;font-size:12px">DEWESOFT</div>
<div class="tb" style="left:125px">FIMA_mess</div>
<div class="td" style="left:197px"></div>
<div class="tb" style="left:207px">FIMA_view</div>
<div class="td" style="left:276px"></div>
<div class="tb" style="left:285px">Diag</div>
<div class="td" style="left:318px"></div>
<div class="tb" style="left:328px">Freigabe</div>
<div class="td" style="left:385px"></div>
<div class="tb" style="left:394px">LRA</div>
<div class="td" style="left:426px"></div>
<div class="tb" style="left:436px">DKVSDFRM</div>
<div class="td" style="left:507px"></div>
<div class="tb" style="left:519px">EngCoorrCoupl</div>
<div class="td" style="left:615px"></div>
<div class="tb" style="left:624px">PhyUrg</div>
<div class="td" style="left:673px"></div>
<div class="tb" style="left:682px">LeastSq</div>
<div class="td" style="left:732px"></div>
<div class="tb" style="left:746px">LR</div>
<div class="td" style="left:775px"></div>
<div class="tb" style="left:785px">FAPAFG</div>
<div class="td" style="left:836px"></div>
<div class="a" style="left:837px;top:683px;width:52px;height:28px;overflow:hidden"><div class="tb" style="left:2px;top:0">ExhMod</div></div>
<div class="a" style="left:888px;top:683px;width:37px;height:1px;background:#c8c8c8"></div>
<div class="a" style="left:889px;top:690px;width:36px;height:18px;border:1px solid #adadad;background:#e8e8e8"></div>
<div class="a" style="left:906px;top:691px;width:1px;height:16px;background:#adadad"></div>
<svg class="a" style="left:895px;top:695px" width="26" height="8"><path d="M1 4L4 1V7z" fill="#222"/><path d="M23 4L20 1V7z" fill="#222"/></svg>
<svg class="a" style="left:935px;top:693px" width="14" height="14"><path d="M7 1V13M1 7H13" stroke="#000" stroke-width="2"/></svg>
<svg class="a" style="left:962px;top:684px" width="26" height="26"><circle cx="10" cy="10" r="8" fill="#a8d4f4" stroke="#4a8ab8" stroke-width="1.5"/><circle cx="8" cy="8" r="3" fill="#e8f6ff"/><path d="M16 16L23 23" stroke="#e88a20" stroke-width="4" stroke-linecap="round"/></svg>
<svg class="a" style="left:996px;top:684px" width="22" height="26"><rect x="1" y="1" width="18" height="23" rx="2" fill="#dde8f8" stroke="#2a7ae0" stroke-width="2"/><rect x="4" y="4" width="12" height="17" fill="#f0f0f0" stroke="#999" stroke-width="0.6"/><path d="M5 8l2 2 4-5M5 15l2 2 4-5" stroke="#d02020" stroke-width="1.4" fill="none"/></svg>
<!-- status -->
<div class="a" style="left:35px;top:712px;width:987px;height:1px;background:#d8d8d8"></div>
<div class="a" style="left:36px;top:714px;width:812px;height:23px;background:#0000ff"></div>
<div class="a" style="left:848px;top:714px;width:1px;height:23px;background:#c0c0c0"></div>
<div class="t" style="left:38px;top:719px;color:#fff;font-size:12px;-webkit-text-stroke:0.35px #fff">Visualization on / Default rec. stopped</div>
<div class="t" style="left:881px;top:719px;color:#2a8a2a">Max. buffer level: 0%</div>
</body></html>
